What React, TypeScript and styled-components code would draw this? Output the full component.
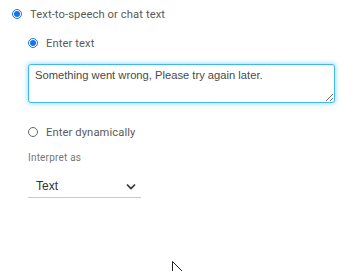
import React from "react";
import styled, { createGlobalStyle } from "styled-components";

const GlobalStyle = createGlobalStyle`
  html, body { margin: 0; padding: 0; background: #fff; }
  body { font-family: Roboto, "Noto Sans", sans-serif; }
`;

const Page = styled.div`
  width: 359px;
  height: 271px;
  position: relative;
  padding: 6px 0 0 12px;
  box-sizing: border-box;
`;

const Option = styled.label`
  display: flex;
  align-items: center;
  gap: 8px;
  height: 16px;
  font-size: 11.2px;
  color: #5a5a5a;
  letter-spacing: 0.1px;
`;

const Radio = styled.span<{ $checked?: boolean }>`
  width: 10px;
  height: 10px;
  border-radius: 50%;
  box-sizing: border-box;
  border: 1px solid ${(p) => (p.$checked ? "#1a73e8" : "#666")};
  display: flex;
  align-items: center;
  justify-content: center;
  flex: none;
  &::after {
    content: "";
    width: 6px;
    height: 6px;
    border-radius: 50%;
    background: ${(p) => (p.$checked ? "#1a73e8" : "transparent")};
  }
`;

const Nested = styled.div`
  display: flex;
  flex-direction: column;
  padding-left: 16px;
`;

const TextBox = styled.textarea`
  margin-top: 13px;
  width: 307px;
  height: 39px;
  box-sizing: border-box;
  border: 1px solid #3db9ee;
  border-radius: 3px;
  box-shadow: 0 0 4px 1px rgba(61, 185, 238, 0.45);
  padding: 4px 6px;
  font-family: "Liberation Sans", Arial, sans-serif;
  font-size: 11.2px;
  color: #4a4a4a;
  outline: none;
`;

const Spacer = styled.div<{ $h: number }>`
  height: ${(p) => p.$h}px;
`;

const Label = styled.div`
  font-size: 10px;
  color: #777;
  letter-spacing: 0.2px;
`;

const Select = styled.div`
  margin-top: 10px;
  width: 113px;
  height: 25px;
  box-sizing: border-box;
  border-bottom: 1px solid #c8c8c8;
  display: flex;
  align-items: flex-end;
  justify-content: space-between;
  padding: 0 5px 4px 8px;
  font-family: "Liberation Sans", Arial, sans-serif;
  font-size: 12px;
  color: #333;
  svg { margin-bottom: 3px; }
`;

const Cursor = styled.svg`
  position: absolute;
  left: 172px;
  top: 261px;
`;

export default function App() {
  return (
    <>
      <GlobalStyle />
      <Page>
        <Option>
          <Radio $checked />
          Text-to-speech or chat text
        </Option>
        <Spacer $h={13} />
        <Nested>
          <Option>
            <Radio $checked />
            Enter text
          </Option>
          <TextBox defaultValue="Something went wrong, Please try again later." />
          <Spacer $h={21} />
          <Option>
            <Radio />
            Enter dynamically
          </Option>
          <Spacer $h={12} />
          <Label>Interpret as</Label>
          <Select>
            Text
            <svg width="10" height="7" viewBox="0 0 10 7">
              <path d="M1 1.5 L5 5.5 L9 1.5" fill="none" stroke="#333" strokeWidth="1.7" />
            </svg>
          </Select>
        </Nested>
        <Cursor width="12" height="12" viewBox="0 0 12 12">
          <path d="M0.5 0.5 L0.5 11 M0.5 0.5 L10 10" stroke="#222" strokeWidth="1" fill="none" />
        </Cursor>
      </Page>
    </>
  );
}
